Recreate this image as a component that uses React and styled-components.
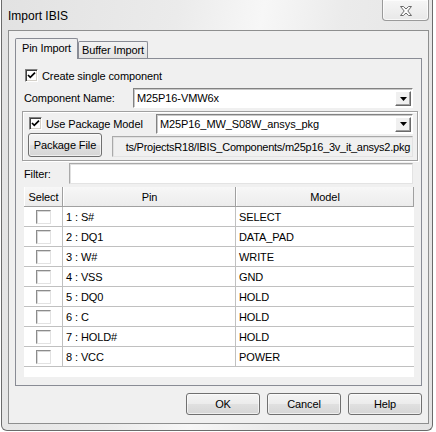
import styled, { createGlobalStyle } from "styled-components";

const GlobalStyle = createGlobalStyle`
  * { box-sizing: border-box; }
  body {
    margin: 0;
    background: #ffffff;
    font-family: "Liberation Sans", Arial, sans-serif;
    font-size: 11px;
    letter-spacing: -0.1px;
    color: #000;
  }
`;

const Window = styled.div`
  position: relative;
  margin-left: 1px;
  width: 432px;
  height: 431px;
  border: 1px solid #6b6b6b;
  border-top: none;
  border-radius: 0 0 6px 6px;
  padding: 0 3px 0 6px;
  display: flex;
  flex-direction: column;
  background: linear-gradient(
    100deg,
    #e2e2e2 0%,
    #ebebeb 35%,
    #f7f7f7 52%,
    #ebebeb 68%,
    #e3e3e3 100%
  );
`;

const TitleBar = styled.div`
  height: 30px;
  display: flex;
  align-items: center;
  padding-top: 2px;
`;

const Title = styled.span`
  font-size: 12px;
  letter-spacing: 0;
  color: #000;
`;

const CloseButton = styled.div`
  position: absolute;
  top: 0;
  right: 3px;
  width: 47px;
  height: 21px;
  border: 1px solid #9a9a9a;
  border-top: none;
  border-radius: 0 0 4px 4px;
  background: linear-gradient(#f6f6f6, #e8e8e8);
  display: flex;
  align-items: center;
  justify-content: center;
  padding-top: 2px;
  box-shadow: inset 0 0 0 1px rgba(255, 255, 255, 0.7);
`;

const Client = styled.div`
  height: 394px;
  border: 1px solid #8e8f8f;
  background: #f0f0f0;
  padding: 7px 6px 8px 6px;
  display: flex;
  flex-direction: column;
`;

const Tabs = styled.div`
  height: 20px;
  display: flex;
  align-items: flex-end;
`;

const Tab = styled.div`
  position: relative;
  width: ${(p) => (p.$active ? 63 : 70)}px;
  height: ${(p) => (p.$active ? 21 : 17)}px;
  margin-bottom: ${(p) => (p.$active ? -1 : 0)}px;
  z-index: ${(p) => (p.$active ? 1 : 0)};
  border: 1px solid #898c95;
  border-bottom: none;
  border-radius: 2px 2px 0 0;
  background: ${(p) =>
    p.$active ? "#f0f0f0" : "linear-gradient(#f3f3f3, #e2e2e2)"};
  display: flex;
  align-items: center;
  justify-content: center;
  padding-bottom: ${(p) => (p.$active ? 2 : 0)}px;
`;

const Panel = styled.div`
  height: 328px;
  border: 1px solid #898c95;
  background: #f0f0f0;
  padding: 10px 0 0 8px;
  display: flex;
  flex-direction: column;
`;

const CheckRow = styled.label`
  display: flex;
  align-items: center;
  gap: 4px;
  height: 13px;
  margin-left: ${(p) => p.$indent || 0}px;
  width: ${(p) => (p.$width ? `${p.$width}px` : "auto")};
  flex-shrink: 0;
`;

const Box = styled.span`
  width: 13px;
  height: 13px;
  flex-shrink: 0;
  background: #fff;
  border-top: 1px solid #808080;
  border-left: 1px solid #808080;
  border-bottom: 1px solid #ffffff;
  border-right: 1px solid #ffffff;
  box-shadow: inset 1px 1px 0 #404040, inset -1px -1px 0 #d4d0c8;
  display: flex;
  align-items: center;
  justify-content: center;
`;

const FieldRow = styled.div`
  display: flex;
  align-items: center;
  height: ${(p) => p.$height || 20}px;
  margin-top: ${(p) => p.$top || 0}px;
`;

const Label = styled.span`
  width: ${(p) => p.$width}px;
  flex-shrink: 0;
  white-space: nowrap;
`;

const Combo = styled.div`
  position: relative;
  width: ${(p) => p.$width}px;
  height: 20px;
  background: #fff;
  border-top: 1px solid #828282;
  border-left: 1px solid #828282;
  border-bottom: 1px solid #ffffff;
  border-right: 1px solid #ffffff;
  box-shadow: inset 1px 1px 0 #c8c8c8;
  display: flex;
  align-items: center;
  padding-left: 3px;
  white-space: nowrap;
  overflow: hidden;
`;

const DropButton = styled.span`
  position: absolute;
  right: 1px;
  top: 2px;
  width: 16px;
  height: 15px;
  background: #f0f0f0;
  border-top: 1px solid #ffffff;
  border-left: 1px solid #ffffff;
  border-bottom: 1px solid #696969;
  border-right: 1px solid #696969;
  box-shadow: inset -1px -1px 0 #a0a0a0;
  display: flex;
  align-items: center;
  justify-content: center;
`;

const TextBox = styled.div`
  width: ${(p) => p.$width}px;
  height: 21px;
  margin-left: ${(p) => p.$left || 0}px;
  margin-top: ${(p) => p.$top || 0}px;
  background: ${(p) => (p.$readOnly ? "#f0f0f0" : "#ffffff")};
  border: 1px solid #a9a9a9;
  border-bottom-color: #e3e3e3;
  border-right-color: #e3e3e3;
  box-shadow: inset 1px 1px 0 #e0e0e0;
  display: flex;
  align-items: center;
  justify-content: ${(p) => (p.$readOnly ? "flex-end" : "flex-start")};
  padding: 0 2px 0 3px;
  white-space: nowrap;
  overflow: hidden;
`;

const Scrolled = styled.span`
  flex-shrink: 0;
  letter-spacing: -0.25px;
`;

const Group = styled.div`
  width: 396px;
  height: 50px;
  margin-top: 3px;
  margin-left: -2px;
  border: 1px solid #a0a0a0;
  box-shadow: inset 1px 1px 0 #ffffff, 1px 1px 0 #ffffff;
  padding: 2px 4px 0 6px;
  display: flex;
  flex-direction: column;
`;

const GroupLine = styled.div`
  display: flex;
  align-items: ${(p) => (p.$top ? "flex-start" : "center")};
  height: ${(p) => p.$height}px;
`;

const Button = styled.div`
  width: ${(p) => p.$width || 74}px;
  height: ${(p) => p.$height || 22}px;
  margin-left: ${(p) => p.$left || 0}px;
  border: 1px solid #707070;
  border-radius: 3px;
  background: linear-gradient(#f4f4f4 0%, #ececec 48%, #e0e0e0 52%, #d6d6d6 100%);
  box-shadow: inset 0 0 0 1px rgba(255, 255, 255, 0.6);
  display: flex;
  align-items: center;
  justify-content: center;
  flex-shrink: 0;
`;

const Grid = styled.div`
  width: 390px;
  height: 190px;
  margin-top: 3px;
  background: #ffffff;
`;

const HeaderRow = styled.div`
  display: flex;
  height: 20px;
  border-bottom: 1px solid #a0a0a0;
`;

const HeaderCell = styled.div`
  width: ${(p) => p.$width}px;
  background: linear-gradient(#f7f7f7, #ececec);
  border-right: 1px solid #a0a0a0;
  border-left: 1px solid #ffffff;
  display: flex;
  align-items: center;
  justify-content: center;
`;

const Row = styled.div`
  display: flex;
  height: 20px;
  border-bottom: 1px solid #c0c0c0;
`;

const Cell = styled.div`
  width: ${(p) => p.$width}px;
  border-right: ${(p) => (p.$last ? "none" : "1px solid #c0c0c0")};
  display: flex;
  align-items: center;
  justify-content: ${(p) => (p.$center ? "center" : "flex-start")};
  padding-left: ${(p) => (p.$center ? 0 : 3)}px;
  padding-top: 1px;
`;

const CellBox = styled.span`
  width: 15px;
  height: 14px;
  background: #fff;
  border-top: 1px solid #8c8c8c;
  border-left: 1px solid #8c8c8c;
  border-bottom: 1px solid #e2e2e2;
  border-right: 1px solid #e2e2e2;
  box-shadow: inset 1px 1px 0 #d8d8d8;
  margin-left: 1px;
`;

const ButtonBar = styled.div`
  display: flex;
  justify-content: flex-end;
  gap: 7px;
  margin-top: 7px;
`;

const CheckMark = () => (
  <svg width="9" height="9" viewBox="0 0 9 9">
    <path d="M1 4 L3.3 6.4 L8 1.6" fill="none" stroke="#000" strokeWidth="1.7" />
  </svg>
);

const Arrow = () => (
  <svg width="7" height="4" viewBox="0 0 7 4">
    <path d="M0 0 H7 L3.5 4 Z" fill="#000" />
  </svg>
);

const CloseGlyph = () => (
  <svg width="12" height="10" viewBox="0 0 12 10">
    <polygon
      points="0.5,0.5 3.4,0.5 6,3 8.6,0.5 11.5,0.5 7.8,5 11.5,9.5 8.6,9.5 6,7 3.4,9.5 0.5,9.5 4.2,5"
      fill="#fdfdfd"
      stroke="#6a6a6a"
      strokeWidth="1"
      strokeLinejoin="round"
    />
  </svg>
);

const pins = [
  ["1 : S#", "SELECT"],
  ["2 : DQ1", "DATA_PAD"],
  ["3 : W#", "WRITE"],
  ["4 : VSS", "GND"],
  ["5 : DQ0", "HOLD"],
  ["6 : C", "HOLD"],
  ["7 : HOLD#", "HOLD"],
  ["8 : VCC", "POWER"],
];

export default function App() {
  return (
    <>
      <GlobalStyle />
      <Window>
        <TitleBar>
          <Title>Import IBIS</Title>
        </TitleBar>
        <CloseButton>
          <CloseGlyph />
        </CloseButton>
        <Client>
          <Tabs>
            <Tab $active>Pin Import</Tab>
            <Tab>Buffer Import</Tab>
          </Tabs>
          <Panel>
            <CheckRow $indent={1}>
              <Box>
                <CheckMark />
              </Box>
              Create single component
            </CheckRow>
            <FieldRow $top={6}>
              <Label $width={109}>Component Name:</Label>
              <Combo $width={280}>
                M25P16-VMW6x
                <DropButton>
                  <Arrow />
                </DropButton>
              </Combo>
            </FieldRow>
            <Group>
              <GroupLine $height={19}>
                <CheckRow $width={127}>
                  <Box>
                    <CheckMark />
                  </Box>
                  Use Package Model
                </CheckRow>
                <Combo $width={257}>
                  M25P16_MW_S08W_ansys_pkg
                  <DropButton>
                    <Arrow />
                  </DropButton>
                </Combo>
              </GroupLine>
              <GroupLine $height={24} $top>
                <Button $width={74} $height={24} $left={-1}>
                  Package File
                </Button>
                <TextBox $width={301} $left={10} $top={3} $readOnly>
                  <Scrolled>
                    ts/ProjectsR18/IBIS_Components/m25p16_3v_it_ansys2.pkg
                  </Scrolled>
                </TextBox>
              </GroupLine>
            </Group>
            <FieldRow $top={2} $height={21}>
              <Label $width={45}>Filter:</Label>
              <TextBox $width={344} />
            </FieldRow>
            <Grid>
              <HeaderRow>
                <HeaderCell $width={39}>Select</HeaderCell>
                <HeaderCell $width={173}>Pin</HeaderCell>
                <HeaderCell $width={178}>Model</HeaderCell>
              </HeaderRow>
              {pins.map(([pin, model]) => (
                <Row key={pin}>
                  <Cell $width={39} $center>
                    <CellBox />
                  </Cell>
                  <Cell $width={173}>{pin}</Cell>
                  <Cell $width={178} $last>
                    {model}
                  </Cell>
                </Row>
              ))}
            </Grid>
          </Panel>
          <ButtonBar>
            <Button>OK</Button>
            <Button>Cancel</Button>
            <Button>Help</Button>
          </ButtonBar>
        </Client>
      </Window>
    </>
  );
}
